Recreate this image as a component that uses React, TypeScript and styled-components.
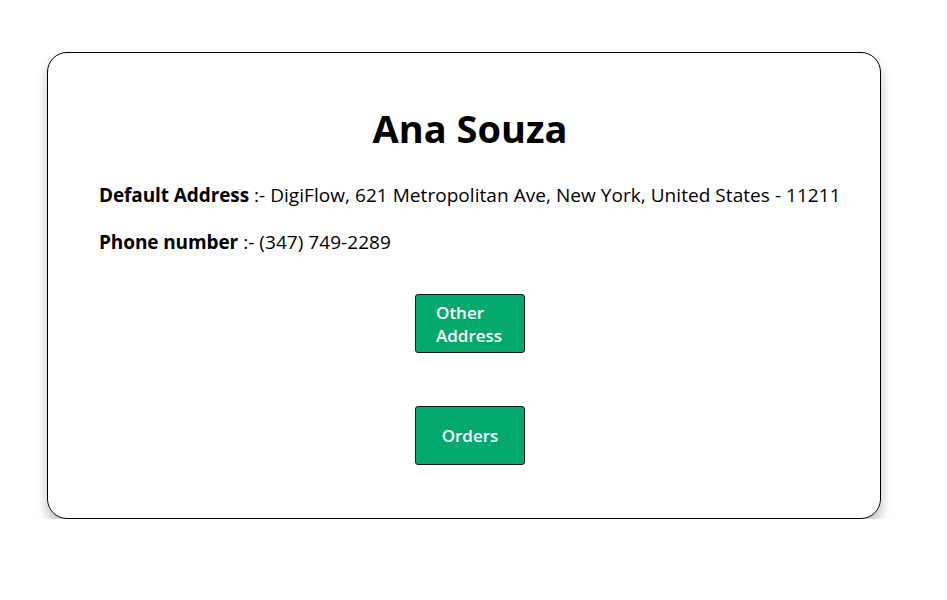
import React from "react";
import styled, { createGlobalStyle } from "styled-components";

const Global = createGlobalStyle`
  html, body { margin: 0; padding: 0; background: #fff; }
  body { font-family: "Open Sans", "Noto Sans", sans-serif; color: #000; }
`;

const Page = styled.div`
  padding: 52px 0 0 47px;
`;

const Card = styled.div`
  box-sizing: border-box;
  width: 834px;
  height: 467px;
  border: 1px solid #000;
  border-radius: 20px;
  box-shadow: 0 8px 12px rgba(0, 0, 0, 0.25);
  padding: 50px 39px 0 51px;
  display: flex;
  flex-direction: column;
`;

const Title = styled.h1`
  margin: 0 0 30px;
  text-align: center;
  font-size: 38px;
  font-weight: 700;
  line-height: 50px;
`;

const Line = styled.p`
  margin: 0 0 22px;
  font-size: 19px;
  line-height: 25px;
  letter-spacing: 0.05px;
  white-space: nowrap;
`;

const Label = styled.b`
  font-weight: 700;
  letter-spacing: -0.1px;
`;

const Actions = styled.div`
  display: flex;
  flex-direction: column;
  align-items: center;
  gap: 53px;
  margin-top: 17px;
`;

const Button = styled.button<{ $align?: "left" | "center" }>`
  box-sizing: border-box;
  width: 110px;
  height: 59px;
  background: #04aa6d;
  color: #fff;
  border: 1px solid #1a1a1a;
  border-radius: 3px;
  font-family: "Open Sans", "Noto Sans", sans-serif;
  font-size: 17px;
  font-weight: 600;
  line-height: 23px;
  padding: 0 20px;
  text-align: ${(p) => (p.$align === "left" ? "left" : "center")};
`;

export default function App() {
  return (
    <>
      <Global />
      <Page>
        <Card>
          <Title>Ana Souza</Title>
          <Line>
            <Label>Default Address</Label> :- DigiFlow, 621 Metropolitan Ave, New York, United States - 11211
          </Line>
          <Line>
            <Label>Phone number</Label> :- (347) 749-2289
          </Line>
          <Actions>
            <Button $align="left">Other Address</Button>
            <Button>Orders</Button>
          </Actions>
        </Card>
      </Page>
    </>
  );
}
